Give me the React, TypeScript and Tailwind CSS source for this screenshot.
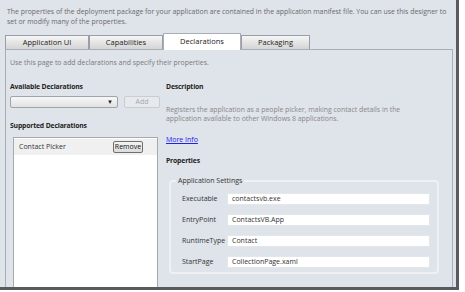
import React from "react";

const font = { fontFamily: '"Open Sans", "Noto Sans", sans-serif' };

function Tab({ label, w, active }: { label: string; w: string; active?: boolean }) {
  if (active) {
    return (
      <div className={`${w} h-[17px] bg-white border border-[#a9adb5] border-b-0 flex items-center justify-center text-[7.5px] text-[#222] relative top-[1px]`}>
        {label}
      </div>
    );
  }
  return (
    <div className={`${w} h-[14px] bg-gradient-to-b from-[#f6f6f6] to-[#d4d4d4] border border-[#9a9ea6] border-b-0 flex items-center justify-center text-[7.5px] text-[#222]`}>
      {label}
    </div>
  );
}

function Row({ label, value }: { label: string; value: string }) {
  return (
    <div className="flex items-center h-[12px]">
      <div className="w-[45px] text-[7px] text-[#333] whitespace-nowrap">{label}</div>
      <div className="w-[203px] h-[12px] bg-white border border-[#e4e6ea] flex items-center pl-[4px] text-[7px] text-[#333]">
        {value}
      </div>
    </div>
  );
}

const heading = "text-[6.8px] font-bold tracking-[-0.15px] text-[#222] h-[10px] leading-[10px]";

export default function App() {
  return (
    <div className="w-[465px] h-[292px] bg-white overflow-hidden" style={font}>
      <div className="w-[459px] h-[290px] border-r-[3px] border-b-[3px] border-[#5a5a5a] bg-[#dfe3ea] flex flex-col overflow-hidden">
        <div className="pt-[7px] pl-[7px] pr-[4px] text-[6.9px] leading-[10px] text-[#6a6a6a]">
          The properties of the deployment package for your application are contained in the application manifest file. You can use this designer to set or modify many of the properties.
        </div>
        <div className="mt-[7px] ml-[5px] flex items-end h-[15px]">
          <Tab label="Application UI" w="w-[84px]" />
          <Tab label="Capabilities" w="w-[74px]" />
          <Tab label="Declarations" w="w-[78px]" active />
          <Tab label="Packaging" w="w-[69px]" />
        </div>
        <div className="ml-[5px] w-[448px] flex-1 border border-[#a9adb5] border-b-0 flex flex-col overflow-hidden">
          <div className="pt-[8px] pl-[4px] text-[6.9px] text-[#7a7a7a]">Use this page to add declarations and specify their properties.</div>
          <div className="flex mt-[14px]">
            <div className="w-[156px] pl-[4px] flex flex-col">
              <div className={heading}>Available Declarations</div>
              <div className="flex mt-[4px] items-center">
                <div className="w-[108px] h-[12px] rounded-[2px] border border-[#9fa3aa] bg-gradient-to-b from-[#f7f7f7] to-[#e2e2e2] flex items-center justify-end pr-[4px]">
                  <span className="text-[6px] text-[#222] leading-none">▼</span>
                </div>
                <div className="ml-[6px] w-[36px] h-[12px] rounded-[2px] border border-[#c9ccd1] bg-[#e6e9ee] flex items-center justify-center text-[7px] text-[#a8a8a8]">Add</div>
              </div>
              <div className={`${heading} mt-[13px]`}>Supported Declarations</div>
              <div className="ml-[3px] mt-[6px] w-[145px] h-[160px] bg-white border border-[#a6a9b0]">
                <div className="h-[16px] bg-[#f0f0f0] mt-[1px] flex items-center justify-between pl-[5px] pr-[14px]">
                  <span className="text-[7px] text-[#333]">Contact Picker</span>
                  <div className="w-[30px] h-[12px] rounded-[2px] border border-[#6f6f6f] bg-gradient-to-b from-[#f4f4f4] to-[#dcdcdc] flex items-center justify-center text-[7px] text-[#111]">Remove</div>
                </div>
              </div>
            </div>
            <div className="flex-1 pl-[4px] flex flex-col">
              <div className={heading}>Description</div>
              <div className="mt-[13px] text-[6.9px] leading-[9px] text-[#888] w-[260px]">
                Registers the application as a people picker, making contact details in the application available to other Windows 8 applications.
              </div>
              <div className="mt-[12px] text-[7px] text-[#2020ee] underline leading-[10px]">More Info</div>
              <div className={`${heading} mt-[11px]`}>Properties</div>
              <div className="relative ml-[3px] mt-[14px] w-[270px] h-[94px] border-2 border-[#eef0f4] rounded-[4px]">
                <div className="absolute -top-[6px] left-[5px] px-[2px] bg-[#dfe3ea] text-[7px] text-[#333] leading-[10px]">Application Settings</div>
                <div className="pt-[11px] pl-[11px] flex flex-col gap-[9px]">
                  <Row label="Executable" value="contactsvb.exe" />
                  <Row label="EntryPoint" value="ContactsVB.App" />
                  <Row label="RuntimeType" value="Contact" />
                  <Row label="StartPage" value="CollectionPage.xaml" />
                </div>
              </div>
            </div>
          </div>
        </div>
      </div>
    </div>
  );
}
